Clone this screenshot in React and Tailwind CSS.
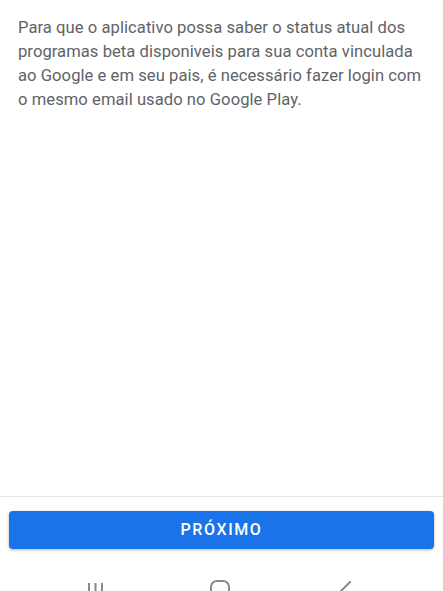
import React from 'react';

const NavBar = () => (
    <div className="flex h-[42px] items-start pl-[87px] pt-[30px]">
        {/* recents */}
        <svg width="17" height="14" viewBox="0 0 17 14" className="mt-[4px]">
            <rect x="1" y="0" width="2" height="14" fill="#8a8a8a" />
            <rect x="7.5" y="0" width="2" height="14" fill="#8a8a8a" />
            <rect x="14" y="0" width="2" height="14" fill="#8a8a8a" />
        </svg>
        {/* home */}
        <svg width="20" height="16" viewBox="0 0 20 16" className="ml-[106px] mt-[1px]">
            <rect x="1" y="1" width="18" height="20" rx="6" fill="none" stroke="#8a8a8a" strokeWidth="2" />
        </svg>
        {/* back */}
        <svg width="16" height="16" viewBox="0 0 16 16" className="ml-[106px] mt-[2px]">
            <path d="M14 1 L3 12" fill="none" stroke="#8a8a8a" strokeWidth="2" strokeLinecap="round" />
        </svg>
    </div>
);

export default function App() {
    return (
        <div className="flex h-[591px] w-[443px] flex-col overflow-hidden bg-white font-['Roboto',sans-serif]">
            {/* Body text */}
            <main className="flex-1 px-[18px] pt-[16px]">
                <p className="text-[16.6px] leading-[24px] tracking-[0.05px] text-[#5f6368]">
                    Para que o aplicativo possa saber o status atual dos programas beta disponiveis para sua conta vinculada ao Google e em seu pais, é necessário fazer login com o mesmo email usado no Google Play.
                </p>
            </main>

            {/* Footer */}
            <div className="border-t border-[#e3e3e3] px-[9px] pt-[14px]">
                <button className="flex h-[38px] w-full items-center justify-center rounded-[4px] bg-[#1a73e8] text-[16px] font-medium tracking-[1.6px] text-white shadow-[0_1px_3px_rgba(0,0,0,0.3)]">
                    PRÓXIMO
                </button>
            </div>

            <NavBar />
        </div>
    );
}
